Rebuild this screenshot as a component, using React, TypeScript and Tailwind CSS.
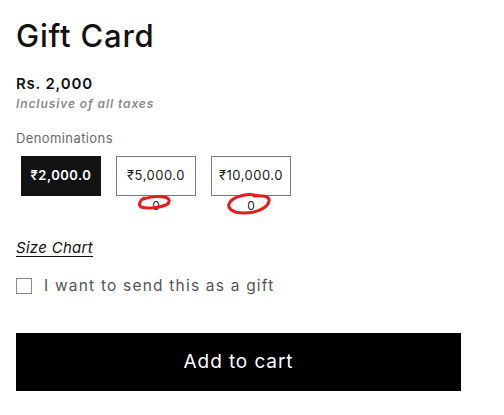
const font = { fontFamily: "Inter, 'Noto Sans', sans-serif" };

const denominations = [
  { label: "₹2,000.0", active: true, count: null as string | null },
  { label: "₹5,000.0", active: false, count: "0" },
  { label: "₹10,000.0", active: false, count: "0" },
];

function Scribble({ wide }: { wide?: boolean }) {
  // hand-drawn red marks over the counts
  if (wide) {
    return (
      <svg className="absolute left-[-21px] top-[-7px] h-[24px] w-[46px]" viewBox="0 0 46 24" fill="none">
        <path
          d="M32 4 C24 1 10 3 4 10 C0 16 6 21 18 21 C30 21 42 16 43 9 C44 4 36 3 28 4"
          stroke="#e11d1d"
          strokeWidth="3"
          strokeLinecap="round"
        />
      </svg>
    );
  }
  return (
    <svg className="absolute left-[-16px] top-[-5px] h-[18px] w-[36px]" viewBox="0 0 36 18" fill="none">
      <path
        d="M8 4 C4 6 2 11 5 13 C10 15 22 14 30 11 C35 8 34 4 28 3 C22 2 12 3 8 5"
        stroke="#e11d1d"
        strokeWidth="3"
        strokeLinecap="round"
      />
    </svg>
  );
}

export default function App() {
  return (
    <div className="min-h-[415px] w-[504px] bg-white px-4 pt-[17px] text-[#121212]" style={font}>
      <h1 className="text-[31px] font-medium leading-[38px] tracking-[0.8px]">Gift Card</h1>

      <p className="mt-[20px] text-[15px] font-semibold leading-[18px] tracking-[0.8px]">Rs. 2,000</p>
      <p className="mt-[4px] text-[12px] font-semibold italic leading-[14px] tracking-[0.9px] text-[#8a8a8a]">
        Inclusive of all taxes
      </p>

      <p className="mt-[19px] text-[13px] leading-[16px] tracking-[0.4px] text-[#6b6b6b]">Denominations</p>

      <div className="ml-[5px] mt-[10px] flex gap-[15px]">
        {denominations.map((d, i) => (
          <div key={d.label} className="flex w-[80px] flex-col items-center">
            <div
              className={
                d.active
                  ? "flex h-[40px] w-[80px] items-center justify-center bg-[#121212] text-[13px] font-semibold tracking-[0.5px] text-white"
                  : "flex h-[40px] w-[80px] items-center justify-center border border-[#7a7a7a] text-[13px] tracking-[0.5px] text-[#222]"
              }
            >
              {d.label}
            </div>
            {d.count && (
              <span className="relative mt-[3px] text-[12px] leading-[14px] text-[#222]">
                {d.count}
                <Scribble wide={i === 2} />
              </span>
            )}
          </div>
        ))}
      </div>

      <a
        href="#"
        className="mt-[26px] inline-block text-[15px] italic leading-[18px] tracking-[0.3px] text-[#121212] underline decoration-1 underline-offset-[3px]"
      >
        Size Chart
      </a>

      <label className="mt-[18px] flex items-center gap-[12px]">
        <span className="h-[16px] w-[16px] border border-[#8a8a8a] bg-white" />
        <span className="text-[15.5px] leading-[18px] tracking-[1.2px] text-[#555]">I want to send this as a gift</span>
      </label>

      <button className="mt-[38px] flex h-[58px] w-[445px] items-center justify-center bg-black text-[19px] font-normal tracking-[0.9px] text-white">
        Add to cart
      </button>
    </div>
  );
}
